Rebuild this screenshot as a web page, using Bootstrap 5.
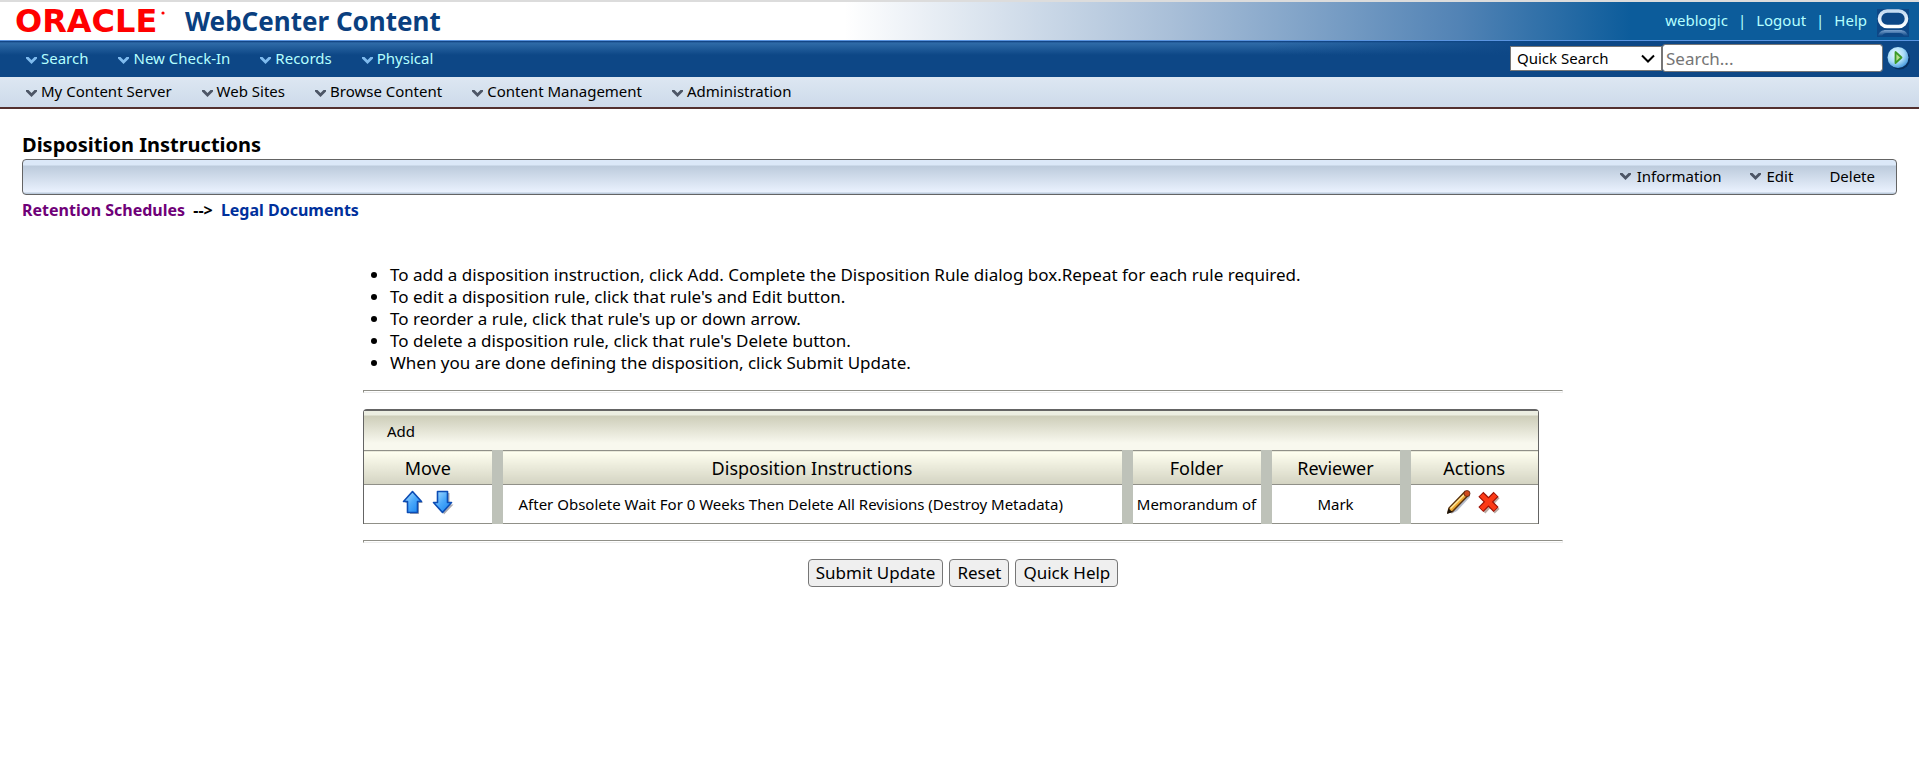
<!DOCTYPE html>
<html lang="en">
<head>
<meta charset="utf-8">
<meta name="viewport" content="width=device-width, initial-scale=1">
<title>Disposition Instructions - WebCenter Content</title>
<link href="https://cdn.jsdelivr.net/npm/bootstrap@5.3.0/dist/css/bootstrap.min.css" rel="stylesheet">
<style>
  body { font-family: "Noto Sans", Tahoma, sans-serif; font-size: 15px; line-height: 22px; color: #000; background: #fff; }
  a { text-decoration: none; }

  .brand-bar { height: 41px; border-top: 2px solid #dcdcdc; border-bottom: 1px solid #5a94e0; padding: 0 10px 0 15px;
    background: linear-gradient(to right, #fff 44%, #a9bfd8 61%, #5283b5 76%, #0c5c9b 85%); }
  .brand-logo { width: 158px; font: bold 32px/36px "DejaVu Sans", sans-serif; color: #f00; }
  .brand-logo svg { width: 4px; height: 20px; }
  .product-name { font-size: 26px; line-height: 36px; font-weight: 700; color: #0a3f7f; margin: 0 0 0 12px; }
  .user-links { font-size: 15px; color: #b4ffff; gap: 10px; margin-right: 10px; padding-bottom: 2px; }
  .user-links a { color: #b4ffff; }

  .primary-bar { height: 36px; padding: 0 8px 2px 26px;
    background: linear-gradient(to right, transparent 66%, #0d4786 80%), linear-gradient(#0a3a7a 0, #2f6ba8 2px, #0d4786 14px); }
  .secondary-bar { height: 32px; background: linear-gradient(#dde7f2, #cddaea); border-bottom: 2px solid #53302f; padding: 0 26px 2px; }
  .menu-link { display: inline-flex; align-items: center; gap: 4px; color: #000; white-space: nowrap; }
  .menu-link svg { width: 11px; height: 7px; fill: currentColor; color: #4d5666; margin-top: 4px; }
  .menu-links { gap: 30px; }
  .primary-bar .menu-link { color: #b4ffff; }
  .primary-bar .menu-link svg { color: #7fbbee; }
  .quick-select { width: 152px; height: 25px; padding: 0 24px 0 6px; border: 1px solid #767676; border-radius: 0; font-size: 15px; line-height: 22px; color: #000;
    background-image: url("data:image/svg+xml,%3csvg xmlns='http://www.w3.org/2000/svg' viewBox='0 0 14 9'%3e%3cpath d='M1 1.500l6 6 6-6' fill='none' stroke='%23000' stroke-width='2'/%3e%3c/svg%3e");
    background-position: right 6px center; background-size: 14px 9px; }
  .quick-input { width: 221px; height: 28px; padding: 0 3px; border: 1px solid #767676; border-radius: 3px; font-size: 17px; line-height: 24px; color: #000; }
  .quick-input::placeholder { color: #757575; }

  .page-main { padding: 21px 22px 40px; }
  .page-title { font-size: 20px; line-height: 29px; font-weight: 700; margin: 0; }
  .tool-strip { height: 36px; border: 1px solid #646464; border-radius: 4px; padding: 0 21px 2px; gap: 28px;
    background: linear-gradient(#dbe8f8 0, #dbe8f8 5px, #bccbdc 6px, #eaf2fe 32px, #bccbdc 33px); }
  .tool-strip .menu-link { gap: 6px; }
  .tool-strip .menu-link svg { margin: 0; }
  .crumbs { font-size: 16px; line-height: 24px; font-weight: 700; margin-top: 3px; }
  .crumbs .seen { color: #6f0078; }
  .crumbs .fresh { color: #00309c; }

  .rule-area { padding: 42px 0 0 7px; }
  .rule-panel { max-width: 1200px; }
  .steps { font-size: 17px; line-height: 22px; padding-left: 27px; margin: 0; }
  .groove { height: 3px; margin: 16px 0; opacity: 1; border: 1px solid; border-color: #909088 #eee #eee #909088; }
  .rule-box { width: 98%; border: solid #646464; border-width: 2px 1px 0; border-radius: 4px 4px 0 0; }
  .rule-actions { height: 39px; padding: 0 23px; background: linear-gradient(#eceee2 0, #eceee2 4px, #cdcdb9 5px, #f8f8ee 32px); }
  .rule-table { width: 100%; table-layout: fixed; text-align: center; }
  .rule-table th { height: 34px; padding: 0; font-size: 18px; font-weight: 400; background: linear-gradient(#fffff0, #d3d3c2); border: solid #909088; border-width: 1px 0; }
  .rule-table td { height: 39px; padding: 0; border-bottom: 1px solid #909088; white-space: nowrap; }
  .rule-table th + th, .rule-table td + td { border-left: 11px solid #bec2b9; }
  .rule-table td.rule-text { text-align: left; padding-left: 16px; }
  .col-side { width: 139px; }
  .col-first, .col-last { width: 133px; }
  .icon-btn { border: 0; padding: 0; background: none; line-height: 0; }
  .rule-table .icon-btn { width: 26px; padding-bottom: 4px; }
  .plain-btn { font-size: 17px; line-height: 22px; padding: 2px 7px; border: 1px solid #767676; border-radius: 4px; background: #efefef; color: #000; }
  .form-buttons { gap: 6px; }
</style>
</head>
<body>
<svg class="d-none" aria-hidden="true">
  <symbol id="chev" viewBox="0 0 11 7"><path d="M0 0h2.500l3 3 3-3H11v1.500L5.500 7 0 1.500z"/></symbol>
</svg>

<header>
  <div class="brand-bar d-flex justify-content-between align-items-center">
    <div class="d-flex align-items-center">
      <div class="brand-logo d-flex align-items-center">ORACLE<svg class="ms-1" viewBox="0 0 4 20" aria-hidden="true"><circle cx="2" cy="2" r="1.600" fill="#f00"/></svg></div>
      <h1 class="product-name">WebCenter Content</h1>
    </div>
    <div class="d-flex align-items-center">
      <nav class="user-links d-flex"><a href="#">weblogic</a><span>|</span><a href="#">Logout</a><span>|</span><a href="#">Help</a></nav>
      <svg class="mt-1" width="32" height="28" viewBox="0 0 32 28" aria-hidden="true">
        <defs>
          <linearGradient id="ring" x1="0" y1="0" x2="0" y2="1"><stop offset="0" stop-color="#c4dbf2"/><stop offset="1" stop-color="#fff"/></linearGradient>
          <linearGradient id="refl" x1="0" y1="0" x2="0" y2="1"><stop offset="0" stop-color="#7ba3cf"/><stop offset="1" stop-color="#0d4786"/></linearGradient>
        </defs>
        <rect width="32" height="28" fill="#0d4786"/>
        <rect x="2.500" y="2" width="27" height="15.500" rx="7.700" fill="none" stroke="url(#ring)" stroke-width="3.600"/>
        <path d="M1 27c1-4 4-6 8-6h14c4 0 7 2 8 6h-4c-1-2-2-3-5-3H10c-3 0-4 1-5 3z" fill="url(#refl)"/>
      </svg>
    </div>
  </div>

  <div class="primary-bar d-flex justify-content-between align-items-center">
    <nav class="menu-links d-flex">
      <a class="menu-link" href="#"><svg><use href="#chev"/></svg>Search</a>
      <a class="menu-link" href="#"><svg><use href="#chev"/></svg>New Check-In</a>
      <a class="menu-link" href="#"><svg><use href="#chev"/></svg>Records</a>
      <a class="menu-link" href="#"><svg><use href="#chev"/></svg>Physical</a>
    </nav>
    <form class="d-flex align-items-center">
      <select class="form-select quick-select" aria-label="Search type"><option>Quick Search</option></select>
      <input class="form-control quick-input me-1" type="text" placeholder="Search..." aria-label="Search text">
      <button class="icon-btn" type="button" aria-label="Go">
        <svg width="24" height="24" viewBox="0 0 24 24">
          <defs><radialGradient id="orb" cx=".4" cy=".35" r=".65"><stop offset="0" stop-color="#e8f8ff"/><stop offset=".6" stop-color="#a9dcf8"/><stop offset="1" stop-color="#4f9fe0"/></radialGradient></defs>
          <circle cx="12.500" cy="13" r="10.500" fill="#07305f"/><circle cx="11" cy="11.500" r="10.500" fill="url(#orb)"/>
          <path d="M8.500 6v11l6-5.500z" fill="#b8e08a" stroke="#3c9a28" stroke-width="1.800" stroke-linejoin="round"/>
        </svg>
      </button>
    </form>
  </div>

  <nav class="secondary-bar menu-links d-flex align-items-center">
    <a class="menu-link" href="#"><svg><use href="#chev"/></svg>My Content Server</a>
    <a class="menu-link" href="#"><svg><use href="#chev"/></svg>Web Sites</a>
    <a class="menu-link" href="#"><svg><use href="#chev"/></svg>Browse Content</a>
    <a class="menu-link" href="#"><svg><use href="#chev"/></svg>Content Management</a>
    <a class="menu-link" href="#"><svg><use href="#chev"/></svg>Administration</a>
  </nav>
</header>

<main class="page-main">
  <h2 class="page-title">Disposition Instructions</h2>
  <div class="tool-strip d-flex justify-content-end align-items-center">
    <a class="menu-link" href="#"><svg><use href="#chev"/></svg>Information</a>
    <a class="menu-link" href="#"><svg><use href="#chev"/></svg>Edit</a>
    <a class="menu-link ms-2" href="#">Delete</a>
  </div>
  <div class="crumbs"><a class="seen" href="#">Retention Schedules</a> <span class="mx-1">--&gt;</span> <a class="fresh" href="#">Legal Documents</a></div>

  <div class="rule-area">
  <div class="rule-panel mx-auto">
    <ul class="steps">
      <li>To add a disposition instruction, click Add. Complete the Disposition Rule dialog box.Repeat for each rule required.</li>
      <li>To edit a disposition rule, click that rule's and Edit button.</li>
      <li>To reorder a rule, click that rule's up or down arrow.</li>
      <li>To delete a disposition rule, click that rule's Delete button.</li>
      <li>When you are done defining the disposition, click Submit Update.</li>
    </ul>
    <hr class="groove">
    <div class="rule-box">
      <div class="rule-actions d-flex align-items-center"><a class="menu-link" href="#">Add</a></div>
      <table class="rule-table">
        <colgroup><col class="col-first"><col><col class="col-side"><col class="col-side"><col class="col-last"></colgroup>
        <thead><tr><th>Move</th><th>Disposition Instructions</th><th>Folder</th><th>Reviewer</th><th>Actions</th></tr></thead>
        <tbody><tr>
          <td>
            <button class="icon-btn" type="button" aria-label="Move up"><svg width="22" height="25" viewBox="0 0 22 25">
              <defs><linearGradient id="blue" x1="0" y1="0" x2="1" y2="1"><stop offset="0" stop-color="#b4e4ff"/><stop offset=".5" stop-color="#4aa8fa"/><stop offset="1" stop-color="#1280f0"/></linearGradient></defs>
              <path d="M12 3l9 10h-4v11H8V13H3z" fill="#a9a9b0"/>
              <path d="M10.500 1.500l9 10h-4v11h-10v-11h-4z" fill="url(#blue)" stroke="#0c4cb4" stroke-width="1.600" stroke-linejoin="round"/></svg></button>
            <button class="icon-btn" type="button" aria-label="Move down"><svg width="22" height="25" viewBox="0 0 22 25">
              <path d="M12 24.500l9.500-10h-4V3H7v11z" fill="#a9a9b0"/>
              <path d="M10.500 22.500l9-10h-4v-11h-10v11h-4z" fill="url(#blue)" stroke="#0c4cb4" stroke-width="1.600" stroke-linejoin="round"/></svg></button>
          </td>
          <td class="rule-text">After Obsolete Wait For 0 Weeks Then Delete All Revisions (Destroy Metadata)</td>
          <td>Memorandum of</td>
          <td>Mark</td>
          <td>
            <button class="icon-btn" type="button" aria-label="Edit"><svg width="24" height="25" viewBox="0 0 24 25">
              <path d="M4 24l6-3L23 7v-4L6 20z" fill="#b4bccc"/>
              <path d="M1 22.500l1-4.500L18 1.500l3.500 3.500L5.500 21.500z" fill="#eda832" stroke="#5a3410" stroke-width="1.500"/>
              <path d="M3.500 18.500L17 5" stroke="#ffe9a0" stroke-width="1.500"/>
              <path d="M0 24l1.500-5.500 4 3.500z" fill="#1a1208"/>
              <circle cx="20" cy="3.500" r="3" fill="#cf4a1c" stroke="#5a2410" stroke-width=".8"/></svg></button>
            <button class="icon-btn" type="button" aria-label="Delete"><svg width="24" height="25" viewBox="0 0 22 23">
              <path d="M5.500 5.500l13 14m0-14l-13 14" stroke="#b9a8a0" stroke-width="6"/>
              <path d="M3.500 4l14 14m0-14l-14 14" stroke="#9c1206" stroke-width="6.500"/>
              <path d="M4 4.500l13 13m0-13l-13 13" stroke="#fb3a16" stroke-width="4.400"/></svg></button>
          </td>
        </tr></tbody>
      </table>
    </div>
    <hr class="groove">
    <div class="form-buttons d-flex justify-content-center">
      <button class="plain-btn" type="button">Submit Update</button>
      <button class="plain-btn" type="button">Reset</button>
      <button class="plain-btn" type="button">Quick Help</button>
    </div>
  </div>
  </div>
</main>
<script src="https://cdn.jsdelivr.net/npm/bootstrap@5.3.0/dist/js/bootstrap.bundle.min.js"></script>
</body>
</html>
